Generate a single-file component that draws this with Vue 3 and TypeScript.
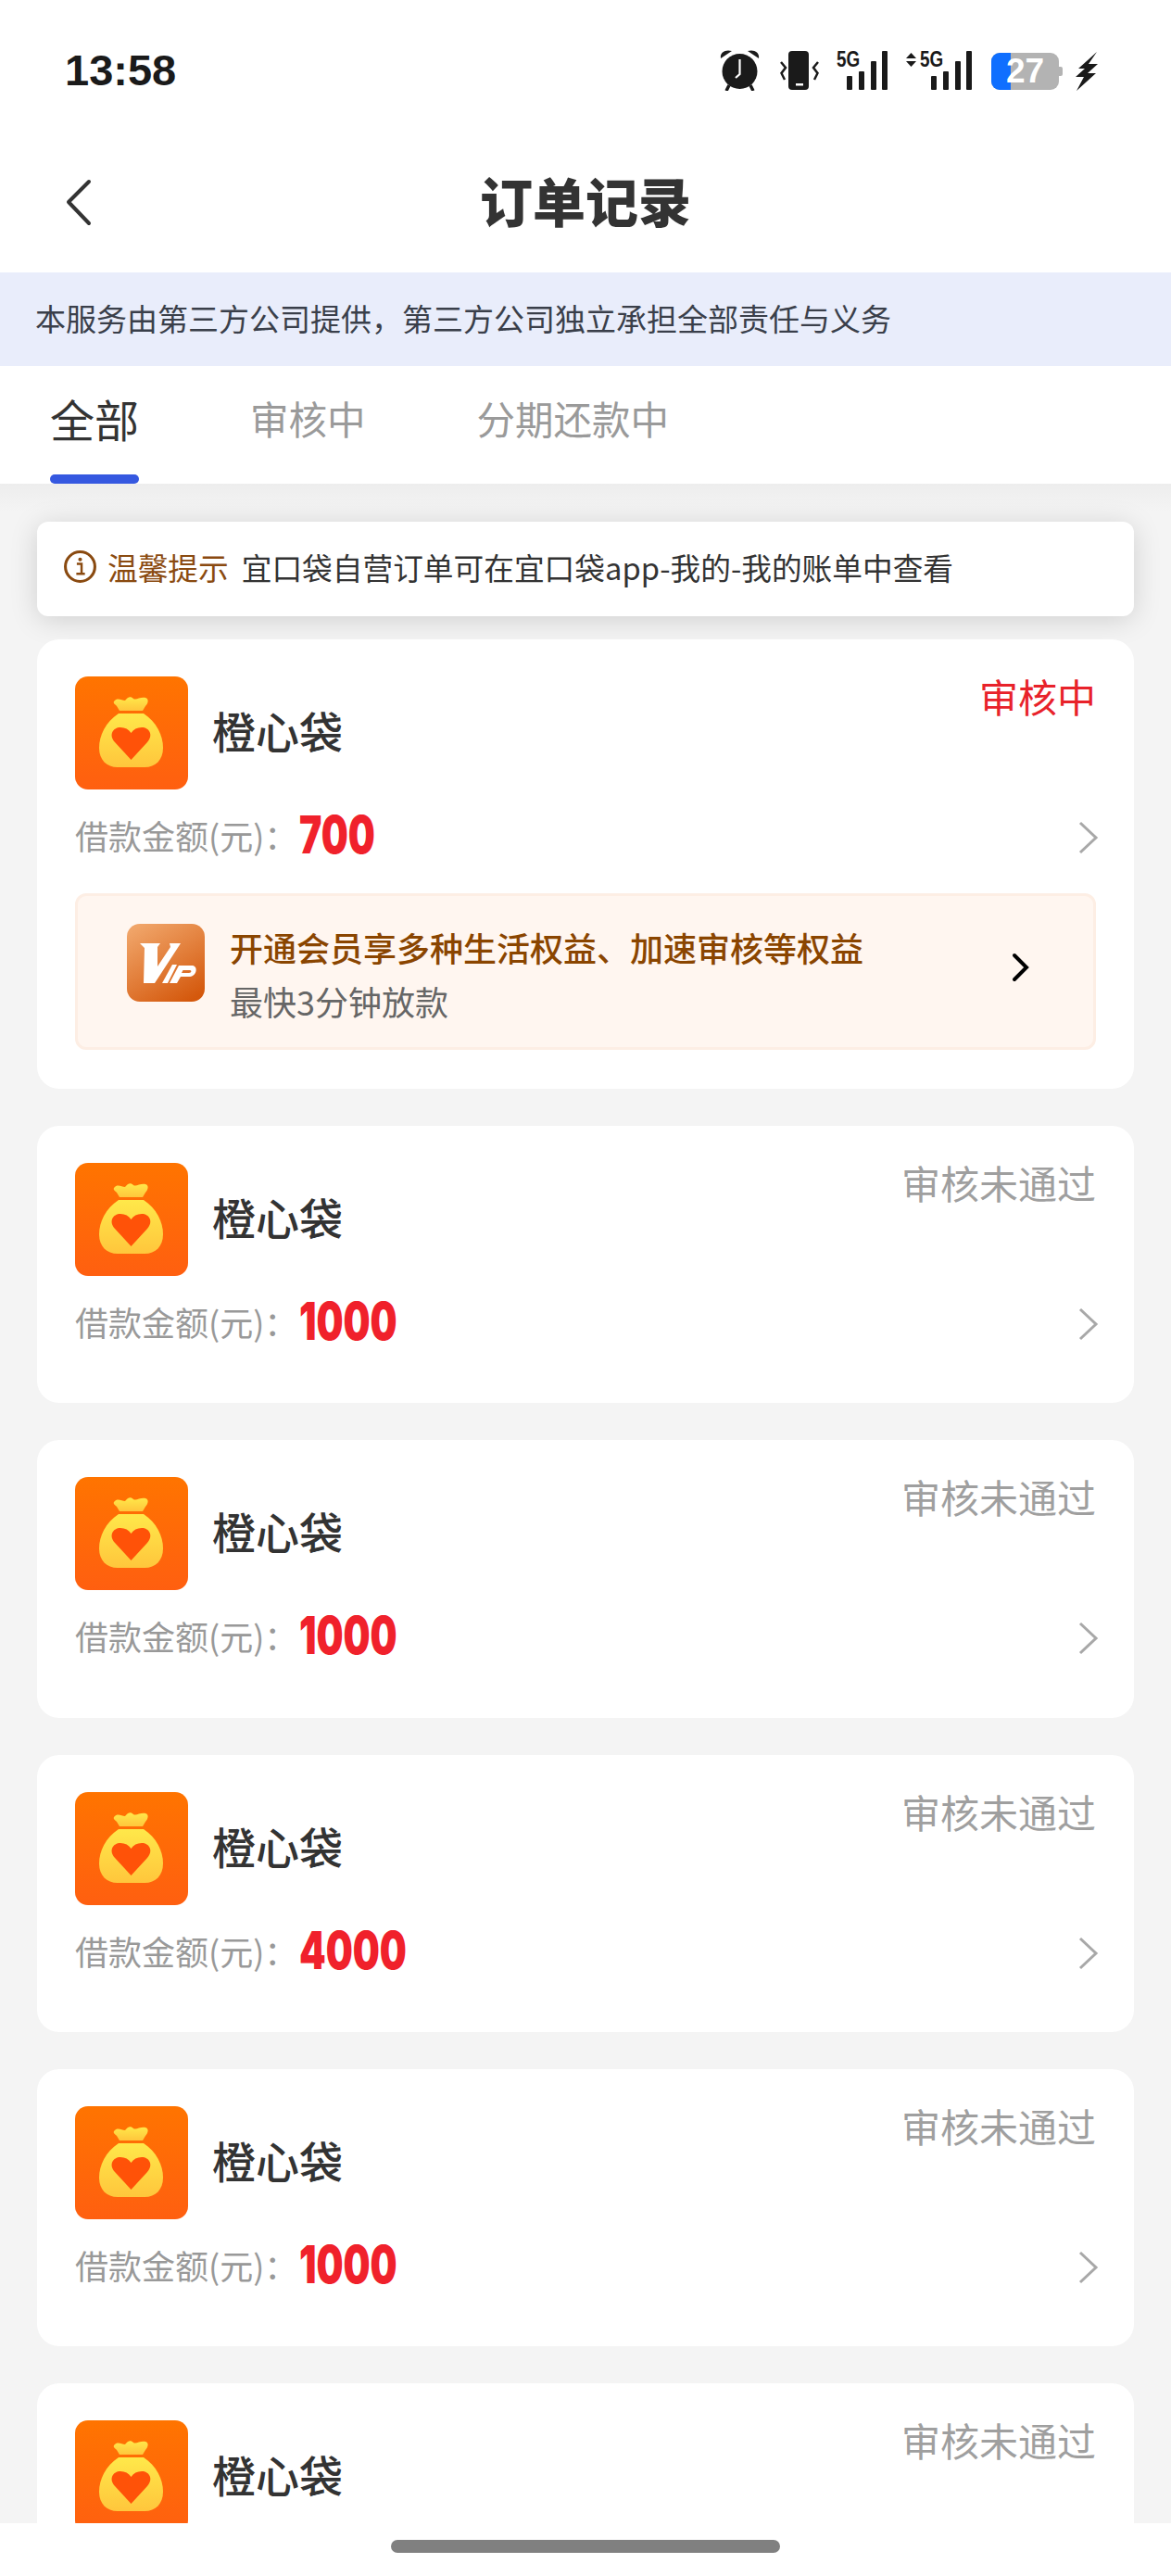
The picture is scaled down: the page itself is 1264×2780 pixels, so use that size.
<script setup lang="ts">
interface Order {
  amount?: string;
  status: string;
  pending?: boolean;
}

const orders: Order[] = [
  { amount: "700", status: "审核中", pending: true },
  { amount: "1000", status: "审核未通过" },
  { amount: "1000", status: "审核未通过" },
  { amount: "4000", status: "审核未通过" },
  { amount: "1000", status: "审核未通过" },
  { status: "审核未通过" },
];
</script>

<template>
  <div class="page">
    <div class="status-bar">
      <span class="time">13:58</span>
      <div class="status-icons">
        <svg width="43" height="44" viewBox="0 0 43 44" class="ic-alarm">
          <circle cx="21.5" cy="23" r="19" fill="#1a1a1a" />
          <path d="M1 9 C0 3 5 -1 13 1 Z M42 9 C43 3 38 -1 30 1 Z" fill="#1a1a1a" />
          <path d="M10 38 L7 44 M33 38 L36 44" stroke="#1a1a1a" stroke-width="3.5" />
          <path d="M21.500 10 V26 L17 30" stroke="#fff" stroke-width="2.2" fill="none" />
        </svg>
        <svg width="42" height="43" viewBox="0 0 42 43" class="ic-vibrate">
          <rect x="9" y="0" width="22" height="42" rx="4" fill="#1a1a1a" />
          <rect x="17" y="35" width="8" height="2.500" fill="#fff" />
          <path d="M1 12 L6 18 L1.500 24 L5 31 M41 12 L36 18 L40.500 24 L37 31" stroke="#1a1a1a" stroke-width="2.500" fill="none" />
        </svg>
        <div class="signal">
          <span class="gen">5G</span>
          <i class="b1"></i><i class="b2"></i><i class="b3"></i><i class="b4"></i>
        </div>
        <div class="signal second">
          <svg width="11" height="15" viewBox="0 0 11 15" class="arrows">
            <path d="M5.500 0 L11 6 H0 Z M5.500 15 L11 9 H0 Z" fill="#1a1a1a" />
          </svg>
          <span class="gen">5G</span>
          <i class="b1"></i><i class="b2"></i><i class="b3"></i><i class="b4"></i>
        </div>
        <div class="battery">
          <div class="battery-fill"></div>
          <span>27</span>
          <i class="battery-tip"></i>
        </div>
        <svg width="24" height="42" viewBox="0 0 24 42" class="ic-bolt">
          <path d="M23 0 L3 18 H10 L0 27 H9 L1 42 L22 23 H13 L24 13 H14 Z" fill="#1a1a1a" />
        </svg>
      </div>
    </div>

    <div class="nav">
      <svg class="back" width="32" height="52" viewBox="0 0 32 52">
        <path d="M26 3 L4 25 L26 48" fill="none" stroke="#333" stroke-width="4" stroke-linecap="round" stroke-linejoin="round" />
      </svg>
      <h1>订单记录</h1>
    </div>

    <div class="notice">本服务由第三方公司提供，第三方公司独立承担全部责任与义务</div>

    <div class="tabs">
      <div class="tab active">全部<i></i></div>
      <div class="tab">审核中</div>
      <div class="tab">分期还款中</div>
    </div>

    <div class="content">
      <div class="tip">
        <svg width="37" height="37" viewBox="0 0 36 36">
          <circle cx="18" cy="18" r="15.500" fill="none" stroke="#8a4a10" stroke-width="3" />
          <circle cx="18" cy="10.500" r="2" fill="#8a4a10" />
          <path d="M14.500 15 H19.500 V25 M14 25.500 H23" fill="none" stroke="#8a4a10" stroke-width="2.400" />
        </svg>
        <span class="tip-label">温馨提示</span>
        <span class="tip-text">宜口袋自营订单可在宜口袋app-我的-我的账单中查看</span>
      </div>

      <div v-for="(o, i) in orders" :key="i" class="card" :class="{ pending: o.pending }">
        <div class="card-top">
          <svg class="logo" width="122" height="122" viewBox="0 0 122 122">
            <defs>
              <linearGradient :id="`bg${i}`" x1="0" y1="0" x2="0" y2="1">
                <stop offset="0" stop-color="#ff7400" />
                <stop offset="1" stop-color="#ff5f10" />
              </linearGradient>
              <linearGradient :id="`bag${i}`" x1="0" y1="0" x2="0" y2="1">
                <stop offset="0" stop-color="#ffe84a" />
                <stop offset="1" stop-color="#ffc63c" />
              </linearGradient>
            </defs>
            <rect width="122" height="122" rx="14" :fill="`url(#bg${i})`" />
            <path d="M42 27 C46 22 50 26 54 26 C57 22 60 21 63 24 C66 26 70 22 76 23 C80 24 79 29 76 32 L73 37 H48 L45 32 C43 30 41 29 42 27 Z" :fill="`url(#bag${i})`" />
            <path d="M47 40 H74 C88 49 95 64 95 77 C95 90 87 98 75 98 H46 C34 98 26 90 26 77 C26 64 33 49 47 40 Z" :fill="`url(#bag${i})`" />
            <path d="M60.500 90 L43 71 C36 63 41 55 49 55 C54 55 58 57 60.500 61 C63 57 67 55 72 55 C80 55 85 63 78 71 Z" fill="#ff5208" />
          </svg>
          <span class="name">橙心袋</span>
          <span class="status">{{ o.status }}</span>
        </div>
        <div v-if="o.amount" class="amount-row">
          <span class="label">借款金额(元)：</span>
          <span class="amount">{{ o.amount }}</span>
          <svg class="chevron" width="24" height="36" viewBox="0 0 24 36">
            <path d="M4 2 L21 18 L4 34" fill="none" stroke="#a8a8a8" stroke-width="3" />
          </svg>
        </div>
        <div v-if="o.pending" class="vip">
          <svg class="vip-logo" width="84" height="84" viewBox="0 0 84 84">
            <defs>
              <linearGradient id="vipbg" x1="0.200" y1="0" x2="0.800" y2="1">
                <stop offset="0" stop-color="#f0a468" />
                <stop offset="1" stop-color="#d4580c" />
              </linearGradient>
            </defs>
            <rect width="84" height="84" rx="14" fill="url(#vipbg)" />
            <path d="M14 21 H36 L33 25 V46 L47 25 L46 21 H58 L30 64 H18 L19 26 Z" fill="#fff" />
            <path d="M38 64 L49 44 H54 L44 64 Z" fill="#fff" />
            <path fill-rule="evenodd" d="M46 64 L56 45 H70 C77 45 76 56 68 57 H58 L54 64 Z M60.500 50 L59 53 H67 C70 53 70 50 68 50 Z" fill="#fff" />
          </svg>
          <div class="vip-text">
            <div class="vip-title">开通会员享多种生活权益、加速审核等权益</div>
            <div class="vip-sub">最快3分钟放款</div>
          </div>
          <svg class="vip-arrow" width="20" height="32" viewBox="0 0 20 32">
            <path d="M3 3 L16 16 L3 29" fill="none" stroke="#000" stroke-width="4" stroke-linecap="round" />
          </svg>
        </div>
      </div>
    </div>

    <div class="home-bar"><i></i></div>
  </div>
</template>

<style>
html, body { margin: 0; background: #f4f4f4; }
</style>

<style scoped>
.page {
  width: 1264px;
  height: 2780px;
  overflow: hidden;
  position: relative;
  background: #f4f4f4;
  font-family: "Noto Sans CJK SC", "Noto Sans", sans-serif;
  color: #333;
}
.status-bar {
  height: 148px;
  box-sizing: border-box;
  background: #fff;
  display: flex;
  align-items: flex-start;
  justify-content: space-between;
  padding: 50px 79px 0 70px;
}
.time {
  font-family: "Liberation Sans", sans-serif;
  font-weight: 700;
  font-size: 47px;
  line-height: 52px;
  color: #1a1a1a;
}
.status-icons { display: flex; align-items: flex-start; margin-top: 4px; }
.ic-alarm { margin-right: 22px; }
.ic-vibrate { margin-right: 19px; margin-top: 1px; }
.signal {
  position: relative;
  width: 55px;
  height: 43px;
  margin-right: 20px;
}
.signal.second { width: 71px; margin-right: 21px; }
.signal .gen {
  position: absolute;
  left: 0;
  top: 0;
  font-family: "Liberation Sans", sans-serif;
  font-weight: 700;
  font-size: 23px;
  line-height: 20px;
  transform: scaleX(0.82);
  transform-origin: left;
  color: #1a1a1a;
}
.signal.second .gen { left: 15px; }
.signal .arrows { position: absolute; left: 0; top: 3px; }
.signal i {
  position: absolute;
  bottom: 0;
  width: 6.5px;
  background: #1a1a1a;
  border-radius: 1px;
}
.signal .b1 { right: 38px; height: 15px; }
.signal .b2 { right: 25px; height: 20px; }
.signal .b3 { right: 12px; height: 31px; }
.signal .b4 { right: 0; height: 42px; }
.battery {
  position: relative;
  width: 73px;
  height: 40px;
  margin: 3px 18px 0 0;
  background: #b3b3b3;
  border-radius: 9px;
  text-align: center;
}
.battery-fill {
  position: absolute;
  left: 0;
  top: 0;
  bottom: 0;
  width: 21px;
  background: #0f6fff;
  border-radius: 9px 0 0 9px;
}
.battery span {
  position: relative;
  font-family: "Liberation Sans", sans-serif;
  font-weight: 700;
  font-size: 37px;
  line-height: 40px;
  color: #fff;
}
.battery-tip {
  position: absolute;
  right: -4px;
  top: 15px;
  width: 4px;
  height: 10px;
  background: #b3b3b3;
  border-radius: 0 2px 2px 0;
}
.ic-bolt { margin-top: 2px; }
.nav {
  height: 146px;
  box-sizing: border-box;
  padding-bottom: 12px;
  background: #fff;
  display: flex;
  align-items: center;
  justify-content: center;
  position: relative;
}
.back { position: absolute; left: 70px; top: 45px; }
.nav h1 {
  margin: 0;
  font-size: 57px;
  font-weight: 900;
  color: #333;
}
.notice {
  height: 101px;
  line-height: 98px;
  padding-left: 38px;
  background: #e9edfb;
  font-size: 33px;
  color: #3a3f4a;
}
.tabs {
  height: 127px;
  background: #fff;
  display: flex;
  padding-left: 54px;
  box-sizing: border-box;
}
.tab {
  position: relative;
  font-size: 41.5px;
  line-height: 112px;
  color: #9a9a9a;
  margin-right: 120px;
}
.tab.active { font-size: 48px; color: #333; }
.tab.active i {
  position: absolute;
  left: 0;
  right: 0;
  bottom: 0;
  height: 10px;
  border-radius: 5px;
  background: #3558e0;
}
.tab.active { height: 127px; }
.content {
  padding: 41px 40px 0;
  background: linear-gradient(#ededed, #f4f4f4 30px);
}
.tip {
  height: 102px;
  box-sizing: border-box;
  padding: 0 0 5px 28px;
  background: #fff;
  border-radius: 12px;
  box-shadow: 0 4px 30px rgba(0, 0, 0, 0.15);
  display: flex;
  align-items: center;
  margin-bottom: 25px;
}
.tip-label { font-size: 32.7px; color: #8a4a10; margin: 0 14px 0 11px; }
.tip-text { font-size: 32.7px; color: #333; }
.card {
  background: #fff;
  border-radius: 24px;
  padding: 40px 41px 0;
  height: 299.25px;
  box-sizing: border-box;
  margin-bottom: 40px;
}
.card.pending { height: 485px; }
.card-top {
  display: flex;
  align-items: center;
  position: relative;
}
.logo { flex: none; }
.name {
  font-size: 47px;
  font-weight: 500;
  margin: 0 0 7px 26px;
  color: #333;
}
.status {
  position: absolute;
  right: 0;
  top: -9px;
  font-size: 42px;
  line-height: 60px;
  color: #9f9f9f;
}
.pending .status { color: #e8222a; }
.amount-row {
  display: flex;
  align-items: center;
  position: relative;
  height: 60px;
  margin-top: 19px;
}
.label { font-size: 36px; color: #999; width: 242px; flex: none; }
.amount {
  display: inline-block;
  font-family: "Inter", sans-serif;
  font-weight: 900;
  font-size: 56px;
  line-height: 60px;
  color: #f0212b;
  transform: scaleX(0.73);
  transform-origin: left;
}
.chevron { position: absolute; right: -3px; top: 15px; }
.vip {
  margin-top: 33px;
  height: 169px;
  box-sizing: border-box;
  background: #fff6f0;
  border: 3px solid #fdeee4;
  border-radius: 12px;
  display: flex;
  align-items: flex-start;
  position: relative;
  padding: 30px 0 0 53px;
}
.vip-logo { flex: none; margin-right: 27px; }
.vip-title { font-size: 36px; font-weight: 500; color: #8a4500; line-height: 50px; }
.vip-sub { font-size: 36px; color: #666; line-height: 50px; margin-top: 8px; }
.vip-arrow { position: absolute; right: 68px; top: 61px; }
.home-bar {
  position: absolute;
  left: 0;
  right: 0;
  bottom: 0;
  height: 57px;
  background: #fff;
}
.home-bar i {
  position: absolute;
  left: 422px;
  top: 18px;
  width: 420px;
  height: 14px;
  border-radius: 7px;
  background: #808080;
}
</style>
